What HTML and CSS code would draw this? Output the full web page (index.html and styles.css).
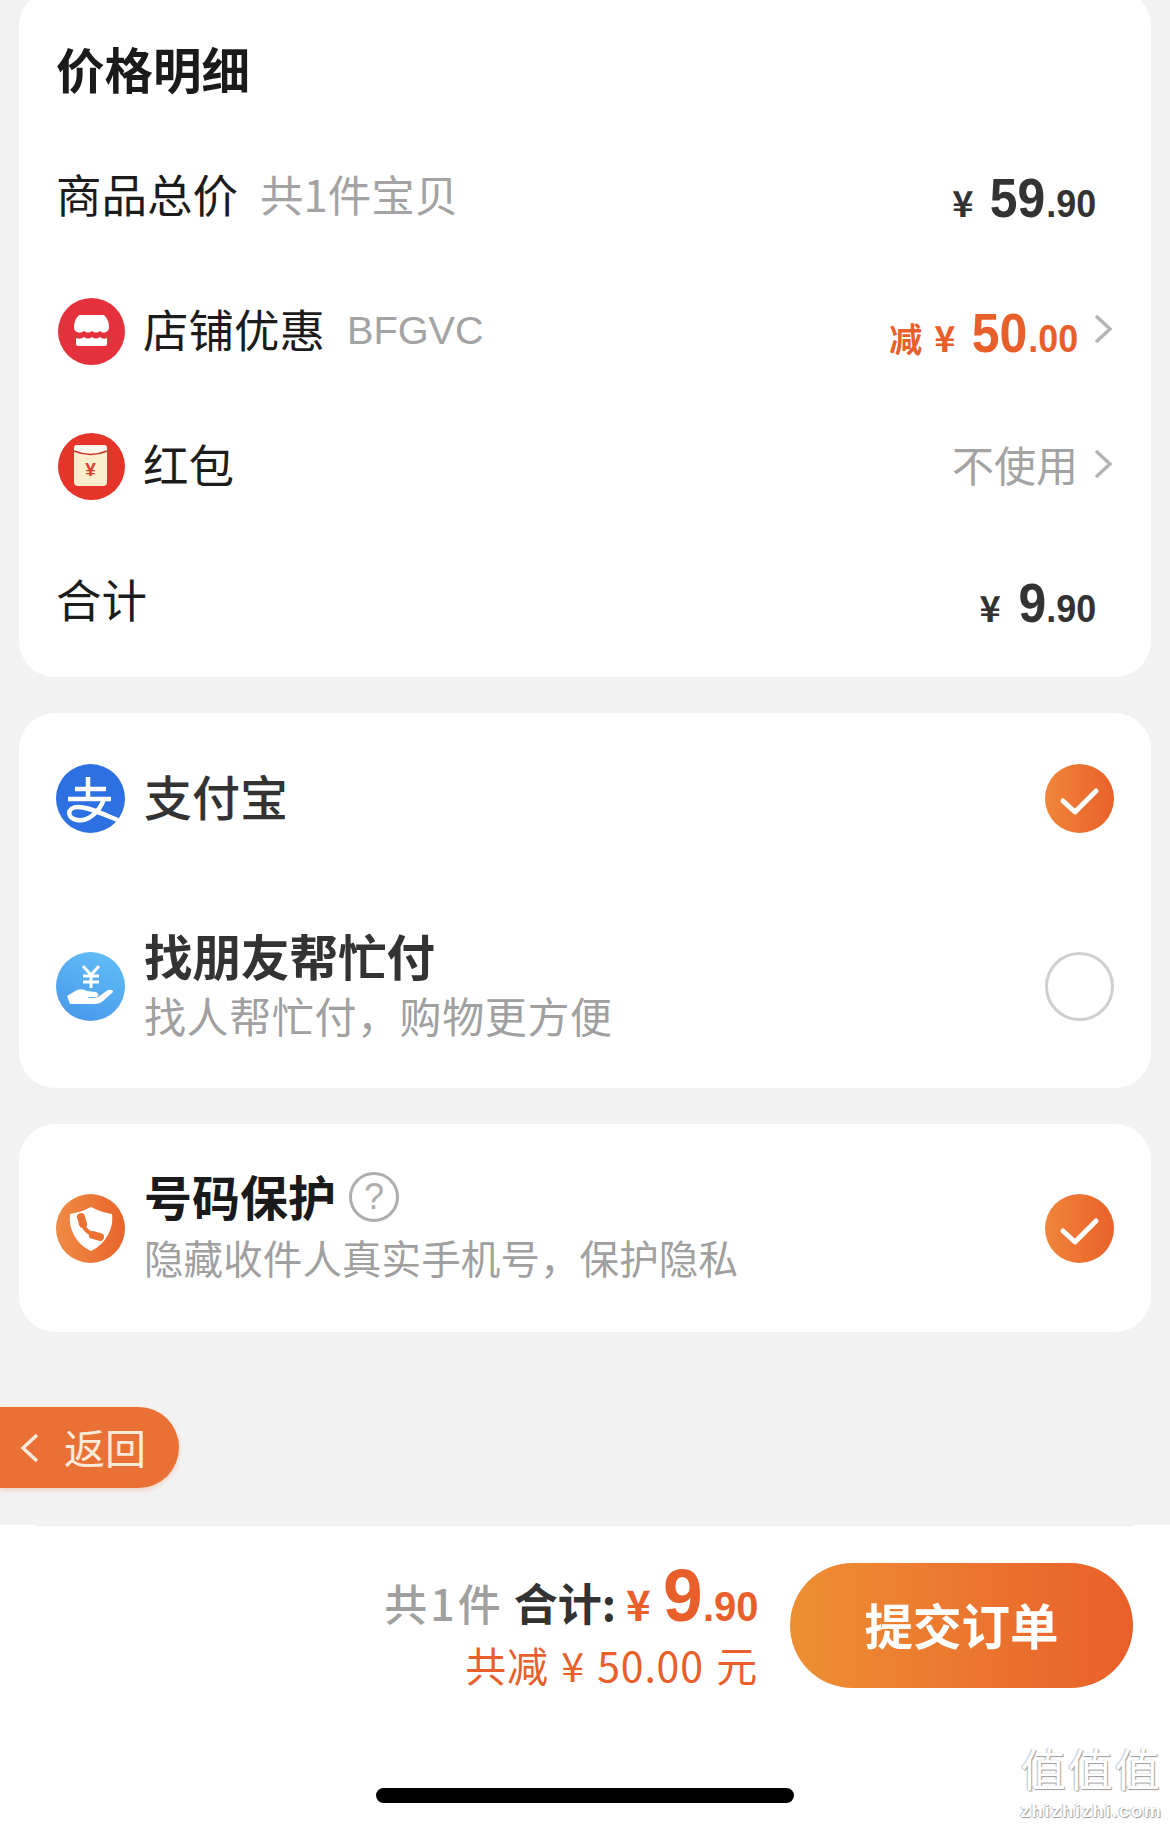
FILE: index.html
```html
<!DOCTYPE html>
<html lang="zh-CN">
<head>
<meta charset="utf-8">
<title>确认订单</title>
<link rel="stylesheet" href="styles.css">
</head>
<body>
<div class="page">
  <section class="card card-price">
    <h2 class="price-title">价格明细</h2>
    <div class="row">
      <span class="label">商品总价</span><span class="note">共1件宝贝</span>
      <span class="price dark with-gap"><i class="yen">¥</i><b class="int two">59</b><i class="dec">.90</i></span>
    </div>
    <div class="row">
      <svg class="icon" viewBox="0 0 67 67"><circle cx="33.5" cy="33.5" r="33.5" fill="#e5313c"/><path d="M21 17H46Q51 22 51 29Q51 33 48 34Q45 36 42 33Q38 36 34 33Q30 36 26 33Q22 36 19 34Q16 33 16 29Q16 22 21 17Z" fill="#fff"/><path d="M18 40Q22 42 26 39Q30 42 34 39Q38 42 42 39Q45 42 49 40V46Q49 48 47 48H20Q18 48 18 46Z" fill="#fff"/></svg>
      <span class="label">店铺优惠</span><span class="note code">BFGVC</span>
      <span class="price orange"><em class="cut">减</em><i class="yen">¥</i><b class="int two">50</b><i class="dec">.00</i></span>
      <svg class="chev" viewBox="0 0 18 30"><path d="M2 2L16 15L2 28" fill="none" stroke="#b4b4b4" stroke-width="3.5"/></svg>
    </div>
    <div class="row">
      <svg class="icon" viewBox="0 0 67 67"><circle cx="33.5" cy="33.5" r="33.5" fill="#e5352b"/><rect x="16" y="12" width="33" height="41" rx="4" fill="#fbeccb"/><path d="M16 17Q33 24 49 17V15Q49 12 46 12H19Q16 12 16 15Z" fill="#fff7ec"/><path d="M16 18Q33 25 49 18" fill="none" stroke="#c8372c" stroke-width="1.5"/><text class="packet-yen" x="32.5" y="43">¥</text></svg>
      <span class="label">红包</span>
      <span class="unused">不使用</span>
      <svg class="chev" viewBox="0 0 18 30"><path d="M2 2L16 15L2 28" fill="none" stroke="#b4b4b4" stroke-width="3.5"/></svg>
    </div>
    <div class="row">
      <span class="label">合计</span>
      <span class="price dark with-gap"><i class="yen">¥</i><b class="int one">9</b><i class="dec">.90</i></span>
    </div>
  </section>

  <section class="card card-pay">
    <div class="pay-row pay-first">
      <svg class="icon-lg" viewBox="0 0 69 69"><defs><clipPath id="ali"><circle cx="34.5" cy="34.5" r="34.5"/></clipPath></defs><circle cx="34.5" cy="34.5" r="34.5" fill="#2c70e2"/><g clip-path="url(#ali)" fill="none" stroke="#fff" stroke-width="4.5"><path d="M19 25H50M32 13V35M12 35H55"/><path d="M48 35C43 49 31 58 21 56C10 54 11 43 22 43C34 43 50 52 72 60"/></g></svg>
      <span class="pay-name">支付宝</span>
      <svg class="tick" viewBox="0 0 69 69"><use href="#tick-shape"/></svg>
    </div>
    <div class="pay-row pay-second">
      <svg class="icon-lg" viewBox="0 0 69 69"><defs><linearGradient id="sky" x1="0.7" y1="0" x2="0.3" y2="1"><stop offset="0" stop-color="#60bcf7"/><stop offset="1" stop-color="#4a99ea"/></linearGradient></defs><circle cx="34.5" cy="34.5" r="34.5" fill="url(#sky)"/><path d="M27 14L35 23L43 14M35 23V36M27 24H43M27 30H43" fill="none" stroke="#fff" stroke-width="3"/><path d="M11 44L21 38Q26 36 31 39L40 40Q44 42 41 45H31Q36 47 42 45L52 38Q57 37 57 40L47 49Q44 52 40 52H14Z" fill="#fff"/></svg>
      <div class="stack stack-pay">
        <span class="pay-name pay-name-bold">找朋友帮忙付</span>
        <span class="sub sub-pay">找人帮忙付，购物更方便</span>
      </div>
      <span class="radio"></span>
    </div>
  </section>

  <section class="card card-protect">
    <div class="protect-row">
      <svg class="icon-lg" viewBox="0 0 69 69"><defs><linearGradient id="warm" x1="0" y1="0" x2="1" y2="0"><stop offset="0" stop-color="#f08b45"/><stop offset="1" stop-color="#e8642a"/></linearGradient></defs><circle cx="34.5" cy="34.5" r="34.5" fill="url(#warm)"/><path d="M35 13C43 17 50 19 56 20C58 34 50 50 35 57C20 50 12 34 14 20C20 19 27 17 35 13Z" fill="#fff"/><g fill="none" stroke="#ec7232" stroke-linecap="round"><path d="M25 23L27 30M37 41L44 43" stroke-width="8"/><path d="M26 28C27 34 33 40 40 42" stroke-width="4"/></g></svg>
      <div class="stack stack-protect">
        <span class="protect-head"><span class="protect-name">号码保护</span><span class="help">?</span></span>
        <span class="sub sub-protect">隐藏收件人真实手机号，保护隐私</span>
      </div>
      <svg class="tick" viewBox="0 0 69 69"><use href="#tick-shape"/></svg>
    </div>
  </section>

  <button class="back" type="button">
    <svg class="back-chev" viewBox="0 0 19 30"><path d="M17 2L3 15L17 28" fill="none" stroke="#fdeadb" stroke-width="3.5"/></svg>
    <span class="back-text">返回</span>
  </button>

  <footer class="footer">
    <div class="footer-line"></div>
    <div class="footer-main">
      <div class="summary">
        <div class="sum-line">
          <span class="sum-count">共1件</span><span class="sum-total">合计:</span><span class="sum-price"><i class="sum-yen">¥</i><b class="sum-int">9</b><i class="sum-dec">.90</i></span>
        </div>
        <div class="sum-cut">共减 ¥ 50.00 元</div>
      </div>
      <button class="submit" type="button"><span class="submit-text">提交订单</span></button>
    </div>
    <div class="home-bar"></div>
    <div class="watermark"><span class="wm-mark">值值值</span><span class="wm-url">zhizhizhi.com</span></div>
  </footer>
</div>
<svg class="defs" width="0" height="0"><defs><linearGradient id="tick-fill" x1="0" y1="0" x2="1" y2="0"><stop offset="0" stop-color="#f0853a"/><stop offset="1" stop-color="#e9612a"/></linearGradient><g id="tick-shape"><circle cx="34.5" cy="34.5" r="34.5" fill="url(#tick-fill)"/><path d="M18 37L30 48L51 27" fill="none" stroke="#fff" stroke-width="5" stroke-linecap="round" stroke-linejoin="round"/></g></defs></svg>
</body>
</html>
```

FILE: styles.css
```css
* { box-sizing: border-box; }
html, body { margin: 0; padding: 0; }
body {
  background: #f2f2f2;
  font-family: "Noto Sans CJK SC", "Liberation Sans", sans-serif;
  color: #1a1a1a;
}
i, em, b { font-style: normal; font-weight: inherit; }
.page {
  height: 1827px;
  overflow: hidden;
  display: flex;
  flex-direction: column;
}
.defs { position: absolute; }
.card {
  background: #fff;
  margin: 0 19px;
  border-radius: 36px;
  flex: none;
}
.card-price { margin-top: -10px; padding-bottom: 8.5px; }
.card-pay { margin-top: 36px; height: 375px; }
.card-protect { margin-top: 36px; height: 208px; }

.price-title {
  margin: 0;
  height: 138.5px;
  padding: 17px 0 0 37px;
  display: flex;
  align-items: center;
  font-size: 48.5px;
  font-weight: 700;
  line-height: 1;
}
.row {
  height: 135px;
  display: flex;
  align-items: center;
  padding: 0 39px 0 37px;
}
.label { font-size: 45.5px; line-height: 1; color: #1c1c1c; padding-bottom: 4px; }
.note { font-size: 43.5px; line-height: 1; color: #a3a3a3; margin-left: 22px; padding-bottom: 4px; }
.note.code { font-family: "Liberation Sans", sans-serif; font-size: 39.7px; margin-left: 22px; padding-bottom: 0; }
.icon { width: 67px; height: 67px; margin: 0 18px 0 2px; flex: none; }
.packet-yen { font: 700 19px "Liberation Sans", sans-serif; fill: #d8402e; text-anchor: middle; }

.price {
  margin-left: auto;
  margin-top: 4px;
  display: flex;
  align-items: baseline;
  font-family: "Liberation Sans", sans-serif;
  font-weight: 700;
  line-height: 1;
}
.price.dark { color: #333; }
.price.orange { color: #e95f2b; }
.price.with-gap { margin-right: 16px; }
.yen { font-size: 36px; margin-right: 17px; font-family: "Noto Sans CJK SC", sans-serif; font-weight: 700; }
.int { font-size: 56px; display: inline-block; transform: scaleX(0.89); transform-origin: right; }
.int.two { margin-left: -7px; }
.int.one { margin-left: -3px; }
.dec { font-size: 39px; display: inline-block; transform: scaleX(0.92); transform-origin: right; margin-left: -4px; }
.cut { font-size: 33px; margin-right: 12px; font-family: "Noto Sans CJK SC", sans-serif; font-weight: 700; }
.unused { margin-left: auto; font-size: 42px; line-height: 1; color: #a3a3a3; padding-bottom: 4px; }
.chev { width: 18px; height: 30px; margin-left: 16px; flex: none; margin-top: -4px; }

.pay-row, .protect-row {
  display: flex;
  align-items: center;
  padding: 0 37px 0 37px;
}
.pay-first { height: 170px; }
.pay-second { height: 205px; padding-top: 2px; }
.protect-row { height: 208px; }
.icon-lg { width: 69px; height: 69px; margin-right: 19px; flex: none; }
.tick { width: 69px; height: 69px; margin-left: auto; flex: none; }
.radio {
  width: 69px;
  height: 69px;
  margin-left: auto;
  border: 3.5px solid #cfcfcf;
  border-radius: 50%;
  flex: none;
}
.pay-name { font-size: 48px; line-height: 59px; font-weight: 500; color: #333; }
.pay-first .pay-name { padding-bottom: 6px; }
.pay-name-bold { font-size: 48.5px; font-weight: 700; }
.stack { display: flex; flex-direction: column; }
.stack-pay, .stack-protect { padding-bottom: 4px; }
.sub { color: #a0a0a0; white-space: nowrap; }
.sub-pay { font-size: 42px; line-height: 59px; letter-spacing: 0.6px; }
.sub-protect { font-size: 39.5px; line-height: 62px; letter-spacing: 0.1px; }
.protect-head { display: flex; align-items: center; height: 62px; }
.protect-name { font-size: 48px; font-weight: 700; line-height: 62px; color: #1a1a1a; }
.help {
  width: 50px;
  height: 50px;
  margin-left: 13px;
  margin-top: 3px;
  border: 3px solid #aeaeae;
  border-radius: 50%;
  color: #aeaeae;
  font: 400 36px/44px "Liberation Sans", sans-serif;
  text-align: center;
}

.back {
  margin-top: 75px;
  width: 179px;
  height: 81px;
  flex: none;
  border: 0;
  padding: 0 0 0 20px;
  display: flex;
  align-items: center;
  background: #ea7135;
  color: #fdeadb;
  border-radius: 0 41px 41px 0;
  box-shadow: 0 2px 5px rgba(236, 114, 50, 0.28);
  font-family: inherit;
  font-size: 41px;
  line-height: 1;
}
.back-chev { width: 19px; height: 30px; margin-right: 25px; flex: none; }
.back-text { padding-bottom: 2px; }

.footer {
  margin-top: auto;
  height: 302px;
  flex: none;
  background: #fff;
  position: relative;
}
.footer-line { height: 1px; margin: 0 37px; background: #ececec; }
.footer-main {
  display: flex;
  justify-content: flex-end;
  align-items: flex-start;
  height: 262px;
  padding: 37px 37px 0 0;
}
.summary { margin-right: 32px; text-align: right; }
.sum-line {
  display: flex;
  align-items: baseline;
  justify-content: flex-end;
  height: 65px;
  line-height: 65px;
}
.sum-count { font-size: 43px; font-weight: 500; color: #a0a0a0; letter-spacing: 3px; margin-right: 10px; }
.sum-total { font-size: 44px; font-weight: 700; color: #333; margin-right: 10px; }
.sum-price {
  display: flex;
  align-items: baseline;
  color: #e95f2b;
  font-family: "Liberation Sans", sans-serif;
  font-weight: 700;
}
.sum-yen { font-size: 42px; margin-right: 12px; font-family: "Noto Sans CJK SC", sans-serif; font-weight: 700; }
.sum-int { font-size: 75px; display: inline-block; transform: scaleX(0.95); transform-origin: right; margin-left: -2px; }
.sum-dec { font-size: 42px; display: inline-block; transform: scaleX(0.95); transform-origin: right; margin-left: -3px; }
.sum-cut { margin-top: 11px; font-size: 41px; line-height: 50px; letter-spacing: 0.8px; word-spacing: 2.5px; color: #e95f2b; white-space: nowrap; }
.submit {
  width: 343px;
  height: 125px;
  flex: none;
  border: 0;
  border-radius: 63px;
  padding: 0;
  background: linear-gradient(90deg, #ee8f33, #e95f2a);
  color: #fff;
  font-family: inherit;
  font-size: 48.5px;
  font-weight: 600;
  line-height: 1;
}
.submit-text { display: block; padding-bottom: 3px; }
.home-bar { width: 418px; height: 15px; margin: 0 auto; background: #000; border-radius: 8px; }
.watermark {
  position: absolute;
  right: 8px;
  bottom: 5px;
  display: flex;
  flex-direction: column;
  align-items: center;
  color: #fff;
  text-shadow: 1px 1px 1px #999, -1px 0 1px #bbb;
}
.wm-mark { font-size: 45px; line-height: 45px; letter-spacing: 2px; }
.wm-url { font: 700 19px/22px "Liberation Sans", sans-serif; letter-spacing: 1.4px; margin-top: 10px; }
```
